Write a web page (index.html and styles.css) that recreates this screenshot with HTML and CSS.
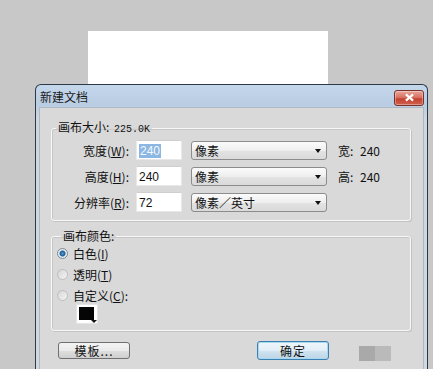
FILE: index.html
```html
<!DOCTYPE html>
<html>
<head>
  <meta charset="utf-8">
  <title>新建文档</title>
  <link rel="stylesheet" href="styles.css">
</head>
<body>
  <div class="stage">
    <!-- document canvas behind the dialog -->
    <div class="canvas"></div>

    <div class="dialog">
      <div class="titlebar">
        <span class="title">新建文档</span>
        <span class="close-btn" title="关闭">
          <svg viewBox="0 0 12 10" class="close-icon">
            <path d="M2 1.5 L10 8.5 M10 1.5 L2 8.5"/>
          </svg>
        </span>
      </div>

      <div class="client">
        <!-- Canvas size -->
        <fieldset class="group size-group">
          <legend>画布大小: <span class="mono">225.0K</span></legend>
          <div class="row">
            <span class="row-label">宽度(<u>W</u>):</span>
            <span class="text-field"><span class="selected-text">240</span></span>
            <span class="select">像素<i class="arrow"></i></span>
            <span class="info">宽: 240</span>
          </div>
          <div class="row">
            <span class="row-label">高度(<u>H</u>):</span>
            <span class="text-field">240</span>
            <span class="select">像素<i class="arrow"></i></span>
            <span class="info">高: 240</span>
          </div>
          <div class="row">
            <span class="row-label">分辨率(<u>R</u>):</span>
            <span class="text-field">72</span>
            <span class="select">像素／英寸<i class="arrow"></i></span>
          </div>
        </fieldset>

        <!-- Canvas color -->
        <fieldset class="group color-group">
          <legend>画布颜色:</legend>
          <div class="radio-row"><span class="radio checked"></span>白色(<u>I</u>)</div>
          <div class="radio-row"><span class="radio"></span>透明(<u>T</u>)</div>
          <div class="radio-row"><span class="radio"></span>自定义(<u>C</u>):</div>
          <div class="swatch"><span class="swatch-color"></span><i class="swatch-arrow"></i></div>
        </fieldset>

        <div class="actions">
          <span class="btn">模板...</span>
          <span class="btn btn-default">确定</span>
          <span class="blur-mark"><i class="dark"></i><i class="light"></i></span>
        </div>
      </div>
    </div>
  </div>
</body>
</html>
```

FILE: styles.css
```css
html, body {
  margin: 0;
  padding: 0;
}
body {
  background-color: #c8c8c8;
  font-family: "Liberation Sans", "Noto Sans CJK SC", sans-serif;
  font-size: 12px;
  color: #111;
}
.stage {
  width: 433px;
  height: 369px;
  overflow: hidden;
  padding-top: 31px;
  box-sizing: border-box;
}
.canvas {
  width: 240px;
  height: 53px;
  margin-left: 88px;
  background-color: #fff;
}

/* Window frame */
.dialog {
  width: 393px;
  height: 300px;
  margin-left: 35px;
  box-sizing: border-box;
  border: 1px solid #2c3a48;
  border-bottom: none;
  border-radius: 6px 6px 0 0;
  background: linear-gradient(#c3d6ea 0px, #b9cde3 20px, #cfd6dd 34px, #d2d8de 100%);
}
.titlebar {
  height: 22px;
  display: flex;
  align-items: center;
  justify-content: space-between;
  padding: 0 3px 0 4px;
}
.title {
  font-family: "Noto Sans CJK SC", sans-serif;
  font-size: 12px;
  color: #1a1a1a;
}
.close-btn {
  width: 28px;
  height: 14px;
  margin-top: 3px;
  display: flex;
  align-items: center;
  justify-content: center;
  border: 1px solid #7a3128;
  border-radius: 3px;
  background: linear-gradient(#e9a89b, #d66b5c 50%, #c4402f 55%, #d0624f);
  box-shadow: inset 0 0 0 1px rgba(255, 255, 255, 0.35);
}
.close-icon {
  width: 11px;
  height: 9px;
}
.close-icon path {
  stroke: #fff;
  stroke-width: 2.4;
  fill: none;
}

/* Client area */
.client {
  margin: 0 3px;
  height: 280px;
  background-color: #d9d9d9;
  border: 1px solid #aeb8c2;
  border-bottom: none;
  padding-top: 12px;
}

/* Group boxes */
.group {
  width: 360px;
  box-sizing: border-box;
  margin: 0 0 0 11px;
  padding: 0;
  border: 1px solid #f7f7f7;
  border-radius: 3px;
  box-shadow: 1px 1px 0 #c2c2c2, inset 1px 1px 0 #c6c6c6;
  font-family: "Noto Sans CJK SC", sans-serif;
}
.group legend {
  margin-left: 4px;
  padding: 0 2px;
  line-height: 14px;
  font-size: 12px;
}
.mono {
  font-family: "Liberation Mono", monospace;
  font-size: 10px;
  margin-left: 2px;
}
.size-group {
  padding: 3px 0 8px 0;
}
.row {
  display: flex;
  align-items: center;
  height: 20px;
  margin-bottom: 6px;
}
.row:last-child {
  margin-bottom: 0;
}
.row-label {
  width: 80px;
  text-align: right;
  padding-right: 3px;
  box-sizing: border-box;
}
.text-field {
  width: 46px;
  height: 20px;
  margin-left: 4px;
  box-sizing: border-box;
  background-color: #fff;
  border: 1px solid #e8e8e8;
  border-top-color: #cfcfcf;
  padding: 3px 0 0 2px;
  font-family: "Liberation Sans", sans-serif;
  font-size: 12px;
  line-height: 14px;
}
.selected-text {
  background-color: #8bb7e2;
  color: #f4f8ff;
  padding: 0 1px;
}
.select {
  position: relative;
  width: 136px;
  height: 19px;
  margin-left: 9px;
  box-sizing: border-box;
  border: 1px solid #8c8c8c;
  border-radius: 3px;
  background: linear-gradient(#fbfbfb, #eeeeee 50%, #e2e2e2 55%, #dadada);
  padding-left: 3px;
  line-height: 17px;
  font-family: "Noto Sans CJK SC", sans-serif;
}
.arrow {
  position: absolute;
  right: 5px;
  top: 7px;
  width: 0;
  height: 0;
  border-left: 3.5px solid transparent;
  border-right: 3.5px solid transparent;
  border-top: 4px solid #111;
}
.info {
  margin-left: 11px;
  word-spacing: 4px;
}

/* Color options */
.color-group {
  margin-top: 8px;
  padding: 0 0 7px 5px;
}
.radio-row {
  display: flex;
  align-items: center;
  height: 21px;
}
.radio {
  width: 11px;
  height: 11px;
  box-sizing: border-box;
  margin-right: 5px;
  border-radius: 50%;
  border: 1px solid #bdbdbd;
  background: linear-gradient(135deg, #d6d6d6, #f4f4f4);
}
.radio.checked {
  border-color: #7f8a94;
  background: radial-gradient(circle, #4e9bd6 0, #1d5e93 2.5px, #e8eef3 3.5px, #dfe4e8 100%);
}
.swatch {
  position: relative;
  width: 20px;
  height: 18px;
  margin: -1px 0 0 20px;
  box-sizing: border-box;
  border: 2px solid #fff;
  border-right-width: 3px;
  border-bottom-width: 3px;
  box-shadow: 0 0 0 1px #e4e4e4;
}
.swatch-color {
  display: block;
  width: 100%;
  height: 100%;
  background-color: #050505;
}
.swatch-arrow {
  position: absolute;
  right: -3px;
  bottom: -3px;
  width: 0;
  height: 0;
  border-left: 3px solid transparent;
  border-right: 3px solid transparent;
  border-top: 3px solid #111;
}

/* Buttons */
.actions {
  display: flex;
  align-items: center;
  height: 19px;
  margin-top: 10px;
  padding-left: 18px;
  font-family: "Noto Sans CJK SC", sans-serif;
}
.btn {
  width: 72px;
  height: 17px;
  box-sizing: border-box;
  display: flex;
  align-items: center;
  justify-content: center;
  border: 1px solid #707070;
  border-radius: 3px;
  background: linear-gradient(#f3f3f3, #ebebeb 50%, #dddddd 55%, #cfcfcf);
  font-size: 12px;
  letter-spacing: 1px;
}
.btn-default {
  height: 19px;
  margin-left: 127px;
  border-color: #3c7fb1;
  box-shadow: inset 0 0 0 1px #a8d8ef;
  background: linear-gradient(#eef6fb, #e2eef7 50%, #cfe2ef 55%, #bcd5e6);
}
.blur-mark {
  display: flex;
  margin-left: 30px;
  margin-top: 5px;
}
.blur-mark i {
  width: 16px;
  height: 15px;
}
.blur-mark .dark {
  background-color: #a9a9a9;
}
.blur-mark .light {
  background-color: #bababa;
}
```
